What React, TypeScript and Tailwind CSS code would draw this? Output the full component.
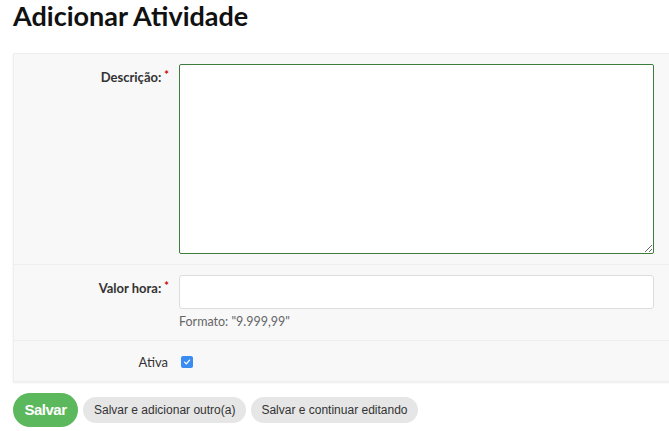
import React from "react";

export default function App() {
  return (
    <div className="w-[669px] h-[431px] overflow-hidden bg-white" style={{ fontFamily: "Lato, 'Liberation Sans', sans-serif" }}>
      <h1 className="pl-[13px] pt-[1px] h-[53px] text-[27px] font-bold leading-[30px] text-[#111]">Adicionar Atividade</h1>
      <div className="ml-[13px] w-[680px] border border-r-0 border-[#eeeeee] bg-[#f8f8f8] shadow-[0_1px_2px_rgba(0,0,0,0.08)]">
        <div className="flex border-b border-[#eeeeee] pt-[10px] pb-[10px]">
          <div className="w-[164px] shrink-0 pt-[5px] pr-[9px] text-right text-[13px] font-bold leading-[16px] text-[#333]">
            Descrição:<span className="relative -top-[3px] ml-[3px] text-[11px] text-[#c00]">*</span>
          </div>
          <textarea className="ml-[1px] h-[190px] w-[475px] resize-y rounded-[2px] border border-[#3c7d3c] bg-white outline-none" />
        </div>
        <div className="flex border-b border-[#eeeeee] pt-[10px] pb-[10px]">
          <div className="w-[164px] shrink-0 pt-[5px] pr-[9px] text-right text-[13px] font-bold leading-[16px] text-[#333]">
            Valor hora:<span className="relative -top-[3px] ml-[3px] text-[11px] text-[#c00]">*</span>
          </div>
          <div className="ml-[1px] flex flex-col">
            <input className="h-[34px] w-[475px] rounded-[3px] border border-[#dddddd] bg-white outline-none" />
            <div className="mt-[5px] text-[12.5px] leading-[16px] text-[#666]">Formato: "9.999,99"</div>
          </div>
        </div>
        <div className="flex items-center pt-[13px] pb-[11px]">
          <div className="w-[164px] shrink-0 pr-[10px] text-right text-[13px] leading-[16px] text-[#333]">Ativa</div>
          <div className="ml-[3px] flex h-[12px] w-[12px] items-center justify-center rounded-[2px] bg-[#3b8cf0]">
            <svg width="8" height="8" viewBox="0 0 10 10"><path d="M2 5.2 L4.2 7.3 L8.2 2.6" fill="none" stroke="white" strokeWidth="1.6" strokeLinecap="round" strokeLinejoin="round" /></svg>
          </div>
        </div>
      </div>
      <div className="mt-[11px] flex items-center gap-[5px] pl-[13px]" style={{ fontFamily: "'Liberation Sans', Arial, sans-serif" }}>
        <button className="h-[34px] w-[65px] rounded-full bg-[#5cb85c] text-[15px] font-bold tracking-[-0.5px] text-white">Salvar</button>
        <button className="h-[26px] rounded-full bg-[#e6e6e6] px-[11px] text-[12px] text-[#333]">Salvar e adicionar outro(a)</button>
        <button className="h-[26px] rounded-full bg-[#e6e6e6] px-[10px] text-[12px] text-[#333]">Salvar e continuar editando</button>
      </div>
    </div>
  );
}
